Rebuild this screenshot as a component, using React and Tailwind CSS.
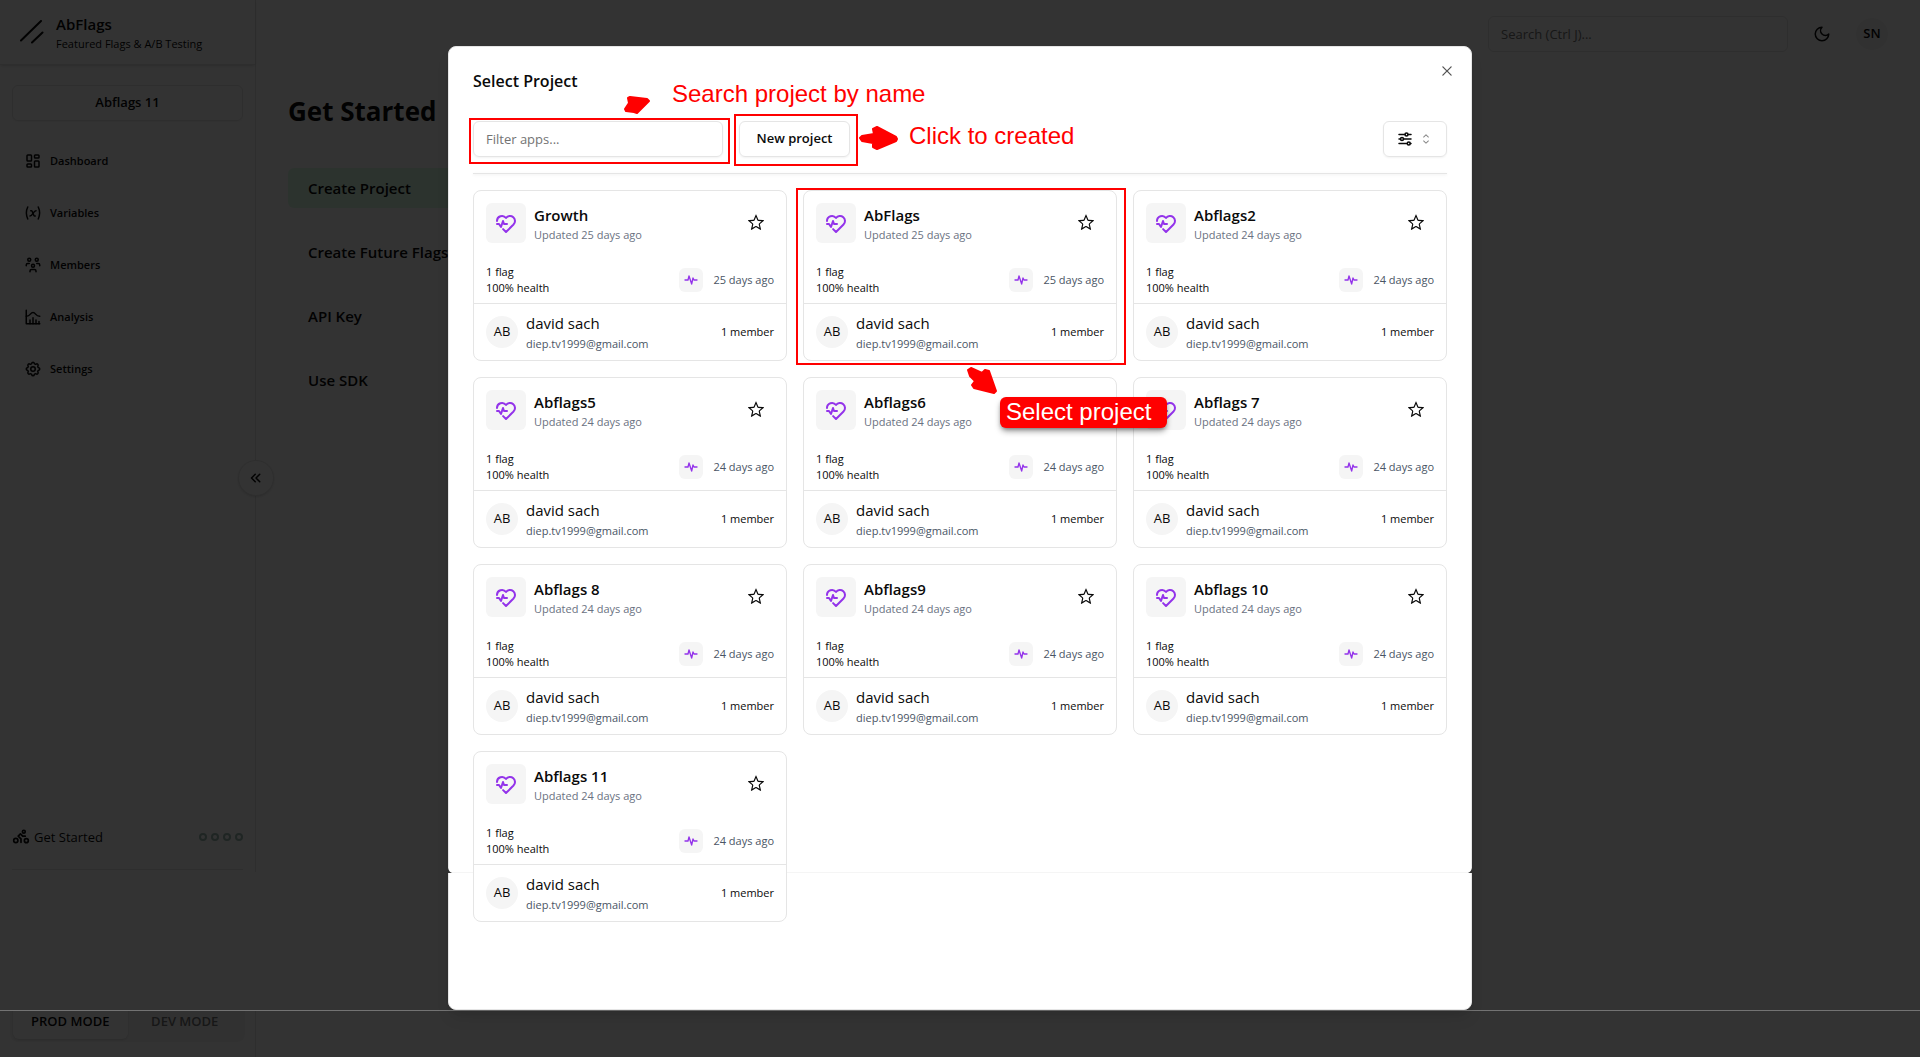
import React from "react";
import {
  TbLayoutDashboard,
  TbVariable,
  TbUsersGroup,
  TbChartHistogram,
  TbSettings,
  TbHeartbeat,
  TbActivityHeartbeat,
  TbAdjustmentsHorizontal,
  TbChevronsLeft,
} from "react-icons/tb";
import { PiPersonSimpleBikeBold } from "react-icons/pi";
import { RxStar, RxCross2, RxCaretSort } from "react-icons/rx";
import { LuMoon } from "react-icons/lu";

const navItems = [
  { label: "Dashboard", Icon: TbLayoutDashboard },
  { label: "Variables", Icon: TbVariable },
  { label: "Members", Icon: TbUsersGroup },
  { label: "Analysis", Icon: TbChartHistogram },
  { label: "Settings", Icon: TbSettings },
];

const steps = ["Create Project", "Create Future Flags", "API Key", "Use SDK"];

const projects = [
  { name: "Growth", days: 25 },
  { name: "AbFlags", days: 25, highlighted: true },
  { name: "Abflags2", days: 24 },
  { name: "Abflags5", days: 24 },
  { name: "Abflags6", days: 24 },
  { name: "Abflags 7", days: 24 },
  { name: "Abflags 8", days: 24 },
  { name: "Abflags9", days: 24 },
  { name: "Abflags 10", days: 24 },
  { name: "Abflags 11", days: 24 },
];

function Sidebar() {
  return (
    <aside className="relative flex w-64 shrink-0 flex-col border-r border-neutral-200">
      <div className="flex h-[65px] items-center gap-3 border-b border-neutral-200 pl-5 shadow-sm">
        <svg viewBox="0 0 24 24" className="size-6" fill="none" stroke="currentColor" strokeWidth="2" strokeLinecap="round">
          <path d="M1 20.500L21 1M12 22.500L22.500 12.500" />
        </svg>
        <div className="pt-1">
          <p className="text-[15px] leading-5 font-semibold">AbFlags</p>
          <p className="text-[11px] leading-5">Featured Flags &amp; A/B Testing</p>
        </div>
      </div>
      <div className="px-3 pt-5">
        <button className="h-9 w-full rounded-md border border-neutral-200 text-[13px] font-semibold shadow-xs">
          Abflags 11
        </button>
      </div>
      <nav className="mt-[22px] flex flex-col gap-4 px-3">
        {navItems.map(({ label, Icon }) => (
          <a key={label} href="#" className="flex h-9 items-center gap-2 pl-3 text-[11px] font-semibold">
            <Icon className="size-[18px]" />
            {label}
          </a>
        ))}
      </nav>
      <div className="mt-auto px-3">
        <div className="flex items-center gap-1 border-b border-neutral-200 pb-[22px]">
          <PiPersonSimpleBikeBold className="size-[18px]" />
          <span className="text-[13px] leading-5">Get Started</span>
          <span className="ml-auto flex gap-1">
            {steps.map((s) => (
              <span key={s} className="size-2 rounded-full border-2 border-emerald-900/40" />
            ))}
          </span>
        </div>
      </div>
      <div className="mt-[132px] mb-[15px] px-[10px]">
        <div className="flex h-10 rounded-lg bg-neutral-100 p-[3px] text-[13px] font-semibold">
          <button className="flex-1 rounded-md bg-white shadow">PROD MODE</button>
          <button className="flex-1 text-neutral-500">DEV MODE</button>
        </div>
      </div>
      <button aria-label="Collapse sidebar" className="absolute top-[460px] -right-[19px] flex size-9 items-center justify-center rounded-full border border-neutral-200 bg-white shadow-sm">
        <TbChevronsLeft className="size-[18px]" />
      </button>
    </aside>
  );
}

function Main() {
  return (
    <div className="flex-1">
      <header className="flex items-center justify-end pt-4 pr-8">
        <input
          aria-label="Search"
          placeholder="Search (Ctrl J)..."
          className="h-9 w-[300px] rounded-md border border-neutral-200 px-3 text-[13px] placeholder:text-neutral-500"
        />
        <button aria-label="Toggle theme" className="ml-4 flex size-9 items-center justify-center">
          <LuMoon className="size-[18px]" />
        </button>
        <span className="ml-4 flex size-8 items-center justify-center rounded-full bg-neutral-100 text-[13px] font-semibold">SN</span>
      </header>
      <main className="px-8">
        <h1 className="mt-[41px] text-[26px] leading-9 font-bold">Get Started</h1>
        <ol className="mt-[39px] flex max-w-xs flex-col gap-6 text-[15px] font-semibold">
          {steps.map((s, i) => (
            <li key={s} className={i === 0 ? "flex h-10 items-center rounded-md bg-green-100 px-5" : "flex h-10 items-center px-5"}>
              {s}
            </li>
          ))}
        </ol>
      </main>
    </div>
  );
}

function ProjectCard({ name, days, highlighted }) {
  return (
    <article className="relative rounded-lg border border-neutral-200 bg-white">
      <div className="mx-3 mt-3 flex h-10 items-center gap-2">
        <span className="flex size-10 items-center justify-center rounded-md bg-neutral-100 text-[#9333ea]">
          <TbHeartbeat className="size-6" />
        </span>
        <div className="pt-1">
          <h3 className="text-[15px] leading-5 font-semibold">{name}</h3>
          <p className="text-[11px] leading-5 text-gray-500">Updated {days} days ago</p>
        </div>
        <button aria-label={"Favorite " + name} className="ml-auto flex size-9 items-center justify-center">
          <RxStar className="size-[18px]" />
        </button>
      </div>
      <div className="mt-[21px] flex items-center justify-between px-3 pb-[7px]">
        <div className="text-[11px] leading-4 font-medium">
          <p>1 flag</p>
          <p>100% health</p>
        </div>
        <div className="flex items-center gap-2.5 text-[11px] text-gray-600">
          <span className="flex size-6 items-center justify-center rounded-md bg-neutral-100 text-[#9333ea]">
            <TbActivityHeartbeat className="size-4" />
          </span>
          {days} days ago
        </div>
      </div>
      <div className="flex items-center gap-2 border-t border-neutral-200 px-3 py-[6px]">
        <span className="flex size-8 items-center justify-center rounded-full bg-neutral-100 text-[13px]">AB</span>
        <div className="pt-[3px]">
          <p className="text-[15px] leading-5">david sach</p>
          <p className="mt-px text-[11px] leading-5 text-gray-600">diep.tv1999@gmail.com</p>
        </div>
        <span className="ml-auto text-[11px] font-medium">1 member</span>
      </div>
      {highlighted && (
        <>
          <div className="pointer-events-none absolute -top-[3px] -right-[10px] -bottom-[5px] -left-2 border-2 border-[#f00]" />
          <svg viewBox="0 0 32 28" className="absolute top-[175px] left-[162px] z-10 h-7 w-8 text-[#f00]" fill="currentColor" stroke="currentColor" strokeWidth="2" strokeLinejoin="round">
            <path d="M2 4L5 2L16 7L19 4L23 5L30 25L28 27L8 22L6 19L9 15L4 10Z" />
          </svg>
          <div className="absolute top-[206px] left-[196px] z-10 flex h-[31px] w-[167px] items-center rounded-md bg-[#f00] pb-[2px] pl-[6px] font-['Liberation_Sans',Arial,sans-serif] text-[24px] whitespace-nowrap text-white shadow-md shadow-black/40">
            Select project
          </div>
        </>
      )}
    </article>
  );
}

function ProjectDialog() {
  return (
    <section role="dialog" aria-labelledby="dialog-title" className="absolute inset-x-0 top-[46px] mx-auto w-full max-w-5xl rounded-lg border border-neutral-200 bg-white px-6 pt-6 pb-[87px] shadow-lg">
      <div aria-hidden="true" className="absolute inset-x-0 top-[825px] h-px bg-neutral-100" />
      <svg aria-hidden="true" viewBox="0 0 4 5" className="absolute top-[821px] -left-px h-[5px] w-1 text-[#333]" fill="currentColor">
        <path d="M0 0Q1 4 4 5H0Z" />
      </svg>
      <svg aria-hidden="true" viewBox="0 0 4 5" className="absolute top-[821px] -right-px h-[5px] w-1 text-[#333]" fill="currentColor">
        <path d="M4 0Q3 4 0 5H4Z" />
      </svg>
      <button aria-label="Close" className="absolute top-4 right-4 text-neutral-600">
        <RxCross2 className="size-4" />
      </button>
      <h2 id="dialog-title" className="text-[16px] leading-5 font-semibold">Select Project</h2>
      <div className="mt-[30px] flex items-center gap-4">
        <div className="relative">
          <input
            aria-label="Filter apps"
            placeholder="Filter apps..."
            className="block h-9 w-[250px] rounded-md border border-neutral-200 px-3 text-[13px] shadow-xs placeholder:text-neutral-500"
          />
          <div className="pointer-events-none absolute -top-[3px] -right-[7px] -bottom-[7px] -left-1 border-2 border-[#f00]" />
          <svg viewBox="0 0 28 20" className="absolute -top-[26px] left-[150px] h-5 w-7 text-[#f00]" fill="currentColor" stroke="currentColor" strokeWidth="2" strokeLinejoin="round">
            <path d="M2 14L6 8L5 3L7 2L24 4L26 6L14 18L11 17L3 16Z" />
          </svg>
          <p className="absolute -top-[41px] left-[199px] font-['Liberation_Sans',Arial,sans-serif] text-[24px] leading-7 whitespace-nowrap text-[#f00]">
            Search project by name
          </p>
        </div>
        <div className="relative">
          <button className="block h-9 w-[111px] rounded-md border border-neutral-200 text-[13px] font-semibold shadow-xs">New project</button>
          <div className="pointer-events-none absolute -top-[7px] -right-2 -bottom-[9px] -left-[5px] border-2 border-[#f00]" />
          <svg viewBox="0 0 40 26" className="absolute top-[4px] left-[119px] h-[26px] w-10 text-[#f00]" fill="currentColor" stroke="currentColor" strokeWidth="2" strokeLinejoin="round">
            <path d="M2 13L4 11L16 9L15 4L19 2L38 12L39 14L38 16L19 24L15 22L15 18L4 16Z" />
          </svg>
          <p className="absolute top-[1px] left-[170px] font-['Liberation_Sans',Arial,sans-serif] text-[24px] leading-7 whitespace-nowrap text-[#f00]">
            Click to created
          </p>
        </div>
        <button aria-label="Sort projects" className="ml-auto flex h-9 w-16 items-center justify-center gap-1 rounded-md border border-neutral-200 shadow-xs">
          <TbAdjustmentsHorizontal className="size-[18px]" />
          <RxCaretSort className="size-4 opacity-50" />
        </button>
      </div>
      <hr className="mt-4 border-neutral-200 shadow-sm" />
      <div className="mt-4 grid grid-cols-3 gap-4">
        {projects.map((p) => (
          <ProjectCard key={p.name} {...p} />
        ))}
      </div>
    </section>
  );
}

export default function App() {
  return (
    <div className="relative flex min-h-screen bg-white font-['Open_Sans','Noto_Sans',sans-serif] text-neutral-950">
      <Sidebar />
      <Main />
      <div className="absolute inset-0 bg-black/80" />
      <div className="absolute inset-x-0 bottom-[46px] h-[139px] border-b border-neutral-500 bg-[#333]" />
      <ProjectDialog />
    </div>
  );
}
